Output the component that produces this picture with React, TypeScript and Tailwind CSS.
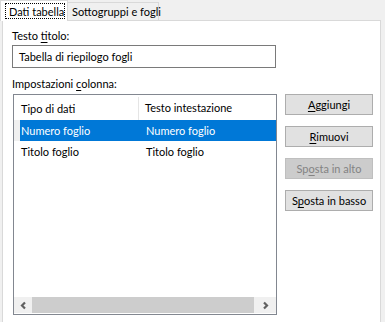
import React from 'react';

const font = { fontFamily: 'Lato, "Liberation Sans", sans-serif' };

const Btn = ({ children, disabled }: { children: React.ReactNode; disabled?: boolean }) => (
  <div
    className={`h-[21px] w-[88px] flex items-center justify-center border text-[11px] leading-none whitespace-nowrap ${
      disabled ? 'bg-[#cccccc] border-[#bfbfbf] text-[#838383]' : 'bg-[#e1e1e1] border-[#adadad] text-black'
    }`}
  >
    <span>{children}</span>
  </div>
);

const Chevron = ({ dir }: { dir: 'left' | 'right' }) => (
  <svg width="9" height="9" viewBox="0 0 9 9">
    <path
      d={dir === 'left' ? 'M6 1.5 L3 4.5 L6 7.5' : 'M3 1.5 L6 4.5 L3 7.5'}
      fill="none"
      stroke="#606060"
      strokeWidth="2.2"
    />
  </svg>
);

export default function App() {
  return (
    <div className="w-[385px] h-[322px] bg-[#f0f0f0] overflow-hidden text-[11px] text-black" style={font}>
      {/* tab strip */}
      <div className="h-[20px] flex items-end pl-[2px] whitespace-nowrap">
        <div className="relative z-10 -ml-[2px] h-[21px] w-[68px] bg-white border border-[#d9d9d9] border-b-0 -mb-px pt-[2px] pl-[4px]">
          <div className="h-[16px] w-[60px] border border-dotted border-black pl-[3px] leading-[15px]">Dati tabella</div>
        </div>
        <div className="h-[18px] w-[91px] bg-[#f0f0f0] border border-[#d9d9d9] border-l-0 border-b-0 pl-[4px] leading-[17px]">
          Sottogruppi e fogli
        </div>
      </div>

      {/* panel */}
      <div className="ml-[2px] w-[379px] h-[310px] bg-white border border-[#d9d9d9] border-b-0 pl-[9px] pt-[7px]">
        <div className="h-[15px] leading-[16px]">
          Testo <span className="underline underline-offset-2">t</span>itolo:
        </div>
        <div className="mt-[2px] w-[264px] h-[23px] border border-[#7a7a7a] leading-[22px] pl-[6px]">
          Tabella di riepilogo fogli
        </div>
        <div className="mt-[8px] h-[15px] leading-[16px]">
          Impostazioni <span className="underline underline-offset-2">c</span>olonna:
        </div>

        <div className="mt-[3px] flex">
          {/* list */}
          <div className="ml-[1px] w-[264px] h-[221px] border border-[#828790] flex flex-col">
            <div className="h-[25px] flex items-center">
              <div className="w-[125px] h-[23px] mt-[1px] pl-[7px] leading-[24px] border-r border-[#e5e5e5]">Tipo di dati</div>
              <div className="pl-[6px] pt-[1px]">Testo intestazione</div>
            </div>
            <div className="h-[21px] flex">
              <div className="w-[6px] bg-[#f0f0f0]" />
              <div className="flex-1 bg-[#0078d7] text-white flex items-center pt-[1px]">
                <div className="w-[126px] pl-[1px]">Numero foglio</div>
                <div>Numero foglio</div>
              </div>
            </div>
            <div className="h-[21px] flex items-center pl-[7px] pt-[1px]">
              <div className="w-[125px]">Titolo foglio</div>
              <div>Titolo foglio</div>
            </div>
            <div className="flex-1" />
            <div className="h-[16px] mb-[1px] flex bg-[#f0f0f0]">
              <div className="w-[18px] flex items-center justify-center">
                <Chevron dir="left" />
              </div>
              <div className="w-[222px] bg-[#cdcdcd]" />
              <div className="flex-1 flex items-center justify-center">
                <Chevron dir="right" />
              </div>
            </div>
          </div>

          {/* buttons */}
          <div className="ml-[8px] flex flex-col gap-[11px]">
            <Btn>
              <span className="underline underline-offset-2">A</span>ggiungi
            </Btn>
            <Btn>
              <span className="underline underline-offset-2">R</span>imuovi
            </Btn>
            <Btn disabled>
              Sp<span className="underline underline-offset-2">o</span>sta in alto
            </Btn>
            <Btn>
              S<span className="underline underline-offset-2">p</span>osta in basso
            </Btn>
          </div>
        </div>
      </div>
    </div>
  );
}
